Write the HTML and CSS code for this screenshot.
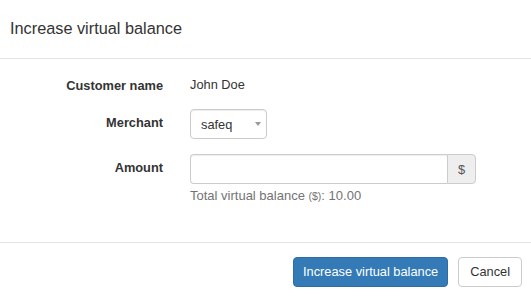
FILE: index.html
```html
<!DOCTYPE html>
<html lang="en">
<head>
<meta charset="utf-8">
<title>Increase virtual balance</title>
<link rel="stylesheet" href="styles.css">
</head>
<body>
<div class="modal">
  <div class="modal-header">
    <h4 class="modal-title">Increase virtual balance</h4>
  </div>
  <div class="modal-body">
    <div class="form-row row-static">
      <label class="form-label">Customer name</label>
      <div class="form-static">John Doe</div>
    </div>
    <div class="form-row row-merchant">
      <label class="form-label">Merchant</label>
      <div class="select-wrap">
        <select class="select">
          <option>safeq</option>
        </select>
        <span class="caret"></span>
      </div>
    </div>
    <div class="form-row row-amount">
      <label class="form-label">Amount</label>
      <div class="control-col">
        <div class="input-group">
          <input class="input" type="text">
          <span class="addon">$</span>
        </div>
        <p class="help">Total virtual balance <span class="small">($)</span>: 10.00</p>
      </div>
    </div>
  </div>
  <div class="modal-footer">
    <button class="btn btn-primary">Increase virtual balance</button>
    <button class="btn btn-default">Cancel</button>
  </div>
</div>
</body>
</html>
```
FILE: styles.css
```css
html, body {
  margin: 0;
  padding: 0;
  background: #fff;
}
body {
  font-family: "Liberation Sans", Arial, sans-serif;
  font-size: 12.8px;
  color: #333;
}
.modal {
  width: 531px;
}
.modal-header {
  padding: 16px 10px 18px;
  border-bottom: 1px solid #e5e5e5;
}
.modal-title {
  margin: 0;
  font-size: 16.3px;
  font-weight: normal;
  line-height: 24px;
  color: #333;
}
.modal-body {
  padding: 12px 0 39px;
}
.form-row {
  display: grid;
  grid-template-columns: 163px 1fr;
  column-gap: 27px;
  align-items: start;
}
.row-merchant {
  margin-top: 8px;
}
.row-amount {
  margin-top: 15px;
}
.form-label {
  text-align: right;
  font-weight: bold;
  line-height: 18px;
  padding-top: 5px;
}
.row-static .form-label {
  padding-top: 6px;
}
.form-static {
  line-height: 18px;
  padding-top: 5px;
  height: 25px;
}
.select-wrap {
  position: relative;
  width: 77px;
  height: 30px;
}
.select {
  -webkit-appearance: none;
  appearance: none;
  width: 77px;
  height: 30px;
  box-sizing: border-box;
  margin: 0;
  padding: 0 20px 0 10px;
  border: 1px solid #ccc;
  border-radius: 4px;
  background: #fff;
  font-family: inherit;
  font-size: 12.8px;
  color: #333;
  box-shadow: inset 0 1px 1px rgba(0,0,0,.075);
}
.caret {
  position: absolute;
  left: 65px;
  top: 13px;
  width: 0;
  height: 0;
  border-left: 3px solid transparent;
  border-right: 3px solid transparent;
  border-top: 4px solid #999;
  pointer-events: none;
}
.control-col {
  display: flex;
  flex-direction: column;
}
.input-group {
  display: flex;
  width: 286px;
  height: 30px;
}
.input {
  flex: 1;
  min-width: 0;
  box-sizing: border-box;
  height: 30px;
  margin: 0;
  padding: 0 10px;
  border: 1px solid #ccc;
  border-right: 0;
  border-radius: 4px 0 0 4px;
  box-shadow: inset 0 1px 1px rgba(0,0,0,.075);
  font-family: inherit;
  font-size: 12.8px;
}
.addon {
  width: 29px;
  box-sizing: border-box;
  height: 30px;
  display: flex;
  align-items: center;
  justify-content: center;
  background: #eee;
  border: 1px solid #ccc;
  border-radius: 0 4px 4px 0;
  color: #555;
}
.help {
  margin: 5px 0 0;
  line-height: 14px;
  font-size: 13px;
  color: #737373;
}
.help .small {
  font-size: 10.5px;
}
.modal-footer {
  border-top: 1px solid #e5e5e5;
  padding: 14px 9px 15px;
  display: flex;
  justify-content: flex-end;
  gap: 10px;
}
.btn {
  height: 30px;
  box-sizing: border-box;
  padding: 0 10px;
  border: 1px solid;
  border-radius: 4px;
  font-family: inherit;
  font-size: 12.8px;
  line-height: 28px;
  cursor: pointer;
}
.btn-primary {
  background: #337ab7;
  border-color: #2e6da4;
  color: #fff;
  padding: 0 9px;
}
.btn-default {
  background: #fff;
  border-color: #ccc;
  color: #333;
  padding: 0 11px;
}
```
